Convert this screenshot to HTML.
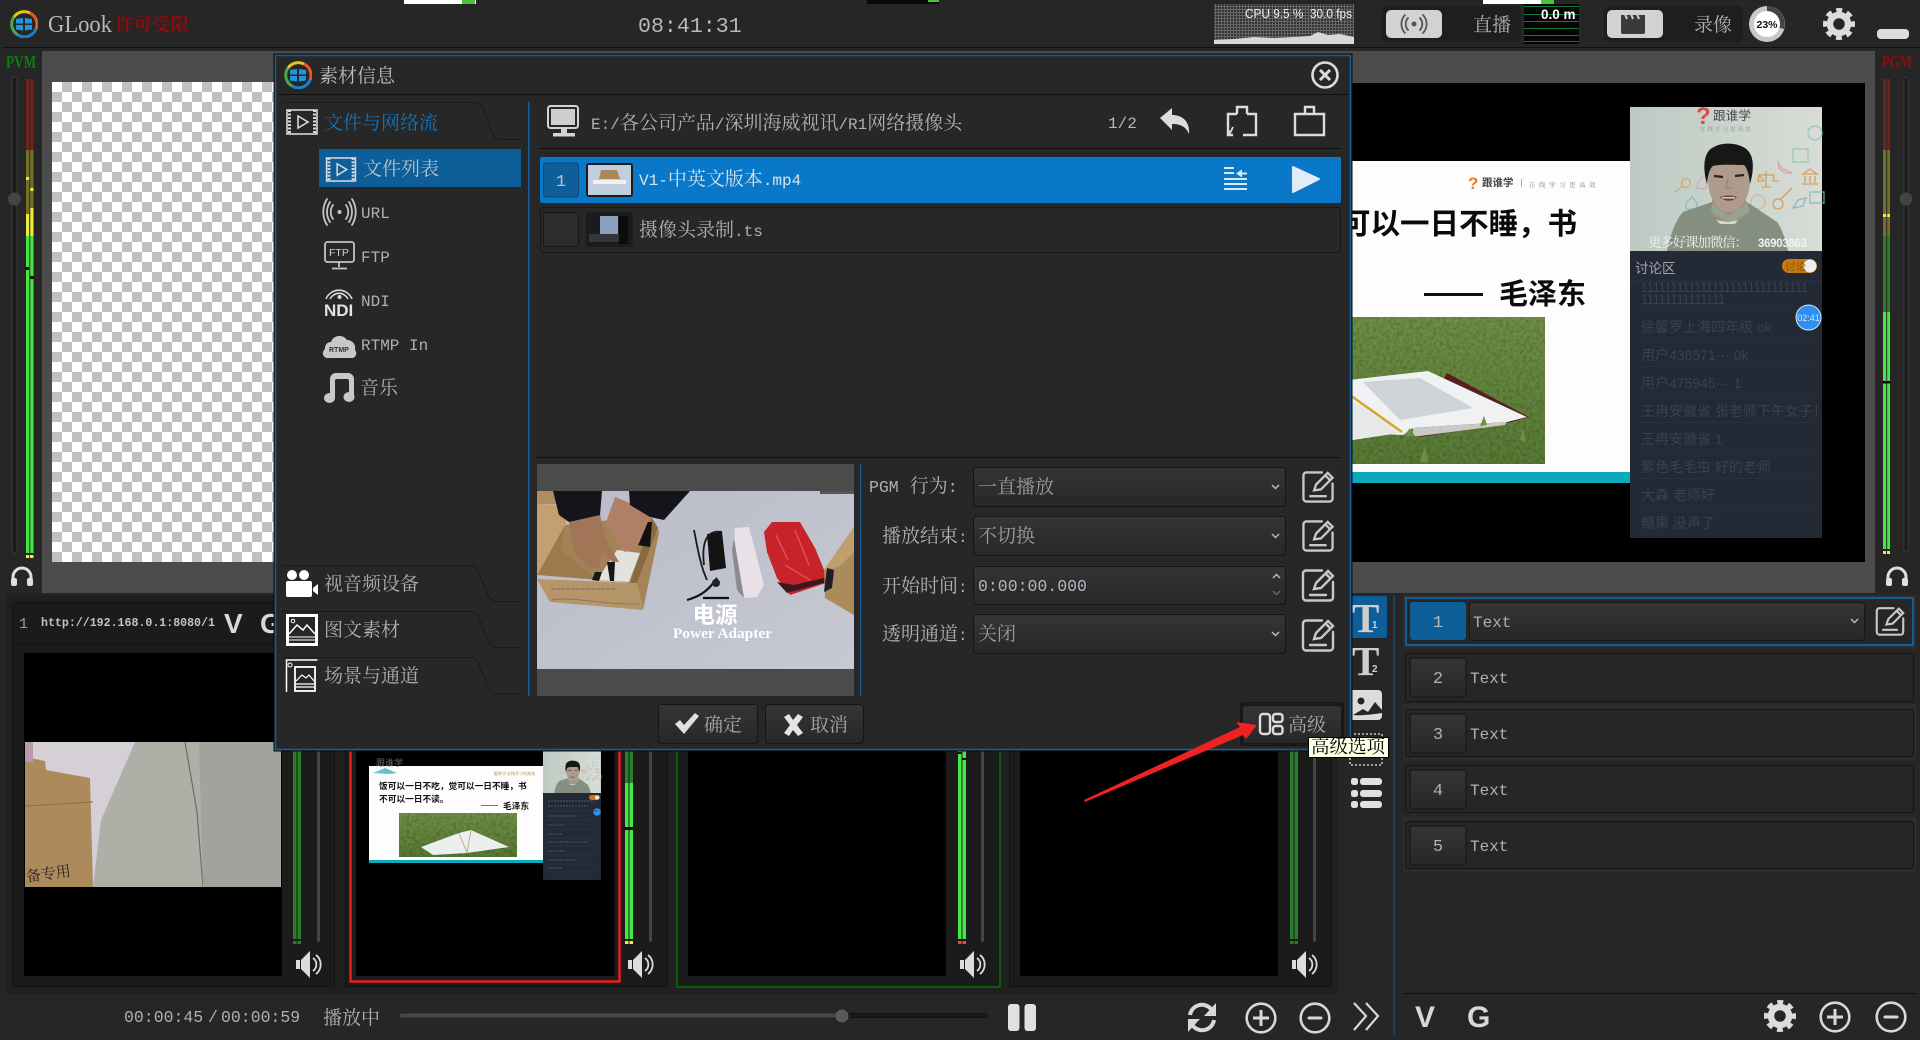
<!DOCTYPE html>
<html lang="zh"><head><meta charset="utf-8"><title>GLook</title>
<style>
html,body{margin:0;padding:0;background:#262626;width:1920px;height:1040px;overflow:hidden}
svg{display:block;position:absolute;left:0;top:0}
text{font-family:"Liberation Serif","Noto Serif CJK SC",serif;font-size:19px;fill:#b0b0b0;white-space:pre}
.m{font-family:"Liberation Mono",monospace;font-size:16px}
.b{font-family:"Liberation Sans","Noto Sans CJK SC",sans-serif;font-weight:bold}
.n{font-family:"Liberation Sans","Noto Sans CJK SC",sans-serif}
.c{fill:#3a414e;font-size:14px;font-family:"Liberation Sans","Noto Sans CJK SC",sans-serif}
</style></head><body>
<svg width="1920" height="1040" viewBox="0 0 1920 1040" xmlns="http://www.w3.org/2000/svg">
<defs>
<pattern id="chk" width="20" height="20" patternUnits="userSpaceOnUse" x="52" y="82"><rect width="20" height="20" fill="#fff"/><rect x="10" width="10" height="10" fill="#c0c0c0"/><rect y="10" width="10" height="10" fill="#c0c0c0"/></pattern>
<pattern id="grid" width="3" height="3" patternUnits="userSpaceOnUse"><rect width="3" height="3" fill="#333"/><rect width="3" height="1" fill="#666"/><rect width="1" height="3" fill="#666"/></pattern>
<linearGradient id="btn" x1="0" y1="0" x2="0" y2="1"><stop offset="0" stop-color="#353535"/><stop offset="1" stop-color="#272727"/></linearGradient>
<linearGradient id="wall" x1="0" y1="0" x2="1" y2="0"><stop offset="0" stop-color="#bccac3"/><stop offset="1" stop-color="#d8dcd6"/></linearGradient>
<linearGradient id="grass" x1="0" y1="0" x2="0" y2="1"><stop offset="0" stop-color="#6f8f45"/><stop offset="1" stop-color="#587a35"/></linearGradient>
<linearGradient id="floor" x1="0" y1="0" x2="1" y2="1"><stop offset="0" stop-color="#b9bcc8"/><stop offset="1" stop-color="#c6c9d2"/></linearGradient>
<filter id="tx" x="0" y="0" width="100%" height="100%"><feTurbulence type="fractalNoise" baseFrequency="0.3" numOctaves="2" result="n"/><feColorMatrix in="n" type="matrix" values="0 0 0 0 0 0 0 0 0 0 0 0 0 0 0 0 0 0 .8 -.28" result="a"/><feMerge><feMergeNode in="SourceGraphic"/><feMergeNode in="a"/></feMerge></filter>

<symbol id="logo" viewBox="0 0 28 28">
<g fill="none" stroke-width="3"><path d="M4 7A12.5 12.5 0 0 1 20 3" stroke="#e8c020"/><path d="M20 3A12.5 12.5 0 0 1 26 19" stroke="#e8582a"/><path d="M26 19A12.5 12.5 0 0 1 8 25" stroke="#1a7fd0"/><path d="M8 25A12.5 12.5 0 0 1 4 7" stroke="#4aa84a"/></g>
<path d="M6 9l7-1v5.500H6zM15 8l7 1v4.500h-7zM6 15h7v5.500l-7-1zM15 15h7v4.500l-7 1z" fill="#1f96e0"/>
</symbol>
<symbol id="edit" viewBox="0 0 34 34"><g fill="none" stroke="#c8c8c8" stroke-width="2.400" stroke-linecap="round"><path d="M21 2.500H5a3 3 0 0 0-3 3v24a3 3 0 0 0 3 3h24a3 3 0 0 0 3-3V14"/><path d="M13 21l2-6L27 3l5 5-12 12zM24.500 5.500l5 5"/><path d="M9 27h16"/></g></symbol>
<symbol id="gear" viewBox="0 0 32 32"><circle cx="16" cy="16" r="9" fill="none" stroke="#dcdcdc" stroke-width="6.500"/><circle cx="16" cy="16" r="13.500" fill="none" stroke="#dcdcdc" stroke-width="5" stroke-dasharray="5.800 4.800" stroke-dashoffset="2.900"/></symbol>
<symbol id="film" viewBox="0 0 32 26"><rect x="1" y="1" width="30" height="24" fill="none" stroke="#d8d8d8" stroke-width="1.600"/><path d="M3.500 1v24M28.500 1v24" stroke="#d8d8d8" stroke-width="3" stroke-dasharray="2 1.500"/><path d="M12 7l10 6-10 6z" fill="none" stroke="#d8d8d8" stroke-width="1.600"/></symbol>
<symbol id="spk" viewBox="0 0 27 27"><path d="M0 9h4v9H0zM5 9l9-9v27l-9-9z" fill="#dcdcdc"/><path d="M17 7a8 8 0 0 1 0 13M20 4a12 12 0 0 1 0 19" fill="none" stroke="#dcdcdc" stroke-width="1.800"/></symbol>
<symbol id="hp" viewBox="0 0 24 20"><path d="M3 14V11a9 9 0 0 1 18 0v3" fill="none" stroke="#e0e0e0" stroke-width="3"/><rect x="1" y="12" width="6" height="8" rx="2" fill="#e0e0e0"/><rect x="17" y="12" width="6" height="8" rx="2" fill="#e0e0e0"/></symbol>
<symbol id="plus" viewBox="0 0 32 32"><circle cx="16" cy="16" r="14.300" fill="none" stroke="#d8d8d8" stroke-width="2.600"/><path d="M8 16h16M16 8v16" stroke="#d8d8d8" stroke-width="3"/></symbol>
<symbol id="minus" viewBox="0 0 32 32"><circle cx="16" cy="16" r="14.300" fill="none" stroke="#d8d8d8" stroke-width="2.600"/><path d="M10 16h12" stroke="#d8d8d8" stroke-width="3" stroke-linecap="round"/></symbol>
<g id="man">
<rect x="1630" y="107" width="192" height="144" fill="url(#wall)"/>
<g fill="none" stroke-width="1.300" opacity=".85">
<rect x="1793" y="149" width="15" height="13" stroke="#8fc8a8"/>
<path d="M1778 161c2 8 6 8 14 12h-6l-7-4z" stroke="#d89aa0"/>
<path d="M1766 171v15M1759 175h15M1759 175l-1 6h6zM1774 175l-1 6h6M1762 187h9" stroke="#d8964a"/>
<path d="M1803 174l7-5 7 5zM1805 176v7M1810 176v7M1815 176v7M1802 184h16" stroke="#d8964a"/>
<circle cx="1778" cy="204" r="5" stroke="#d8964a"/><path d="M1781 199l11-11" stroke="#d8964a"/>
<path d="M1793 208l5-8 8-2-3 8z" stroke="#7cb8c0"/>
<rect x="1810" y="192" width="14" height="11" stroke="#7cb8c0"/>
<circle cx="1758" cy="202" r="7" stroke="#d8b080"/>
<circle cx="1686" cy="183" r="4.500" stroke="#d8a060"/><path d="M1683 186l-8 6" stroke="#d8a060"/>
<path d="M1696 188l6-12 5 3-1 10z" stroke="#d8a8b0"/>
<path d="M1686 203l6-6 5 6v6h-11z" stroke="#7cb8c0"/>
<circle cx="1815" cy="133" r="7" stroke="#8cc4c0"/>
</g>
<path d="M1667 251c3-15 8-30 16-39l29-10 17 8 18-8 30 20c6 9 9 19 11 29z" fill="#858f80"/>
<path d="M1712 200h34l2 14-18 12-17-10z" fill="#a08e80"/>
<path d="M1712 204l17 12 18-13 3 8-20 12-19-11z" fill="#98a292"/>
<path d="M1716 220l13 2 9-2-3 4h-15z" fill="#d2d8ce"/>
<ellipse cx="1729" cy="180" rx="21" ry="32" fill="#ae9b8c"/>
<path d="M1707 184c-5-18-3-33 7-37 8-5 22-4 29 0 11 5 12 20 7 37-1-8-2-15-6-19-10 0-24-1-31 1-4 3-5 10-6 18z" fill="#171715"/>
<path d="M1714 176l9 1M1735 176l9-1" stroke="#2c2420" stroke-width="2.200"/><path d="M1728 179l-2 9h5" stroke="#907c6e" fill="none"/>
<path d="M1720 197c6-2 12-2 17 0-4 5-12 5-17 0z" fill="#6a4038"/><path d="M1722 197h13v1.500h-13z" fill="#d8d0c8"/>
</g>
</defs>

<!-- top bar -->
<rect x="2" y="47" width="1918" height="1" fill="#111"/>
<rect x="404" y="0" width="72" height="4" fill="#fff"/><rect x="462" y="0" width="13" height="4" fill="#4ec23e"/>
<rect x="867" y="0" width="72" height="4" fill="#0a0a0a"/><rect x="928" y="0" width="11" height="2" fill="#4ec23e"/>
<rect x="1483" y="0" width="71" height="4" fill="#fff"/><rect x="1541" y="0" width="13" height="4" fill="#4ec23e"/>
<use href="#logo" x="10" y="10" width="28" height="28"/>
<text x="48" y="32" textLength="64" lengthAdjust="spacingAndGlyphs" style="font-family:'Liberation Serif',serif;font-size:24px;fill:#b8b8b8">GLook</text>
<text x="115" y="31" style="font-size:18.500px;fill:#900c0c;font-weight:bold">许可受限</text>
<text x="638" y="32" style="font-family:'Liberation Mono',monospace;font-size:21.600px;fill:#b8b8b8">08:41:31</text>
<rect x="1214" y="4" width="140" height="40" fill="url(#grid)"/>
<path d="M1214 44v-4l20-1 20-2 20 1 20-1 16-1 8-4 10 3 12-1 14 3v7z" fill="#d8d8d8"/>
<text x="1245" y="18" textLength="107" lengthAdjust="spacingAndGlyphs" class="n" style="font-size:12.500px;fill:#eee">CPU 9.5 %  30.0 fps</text>
<rect x="1382" y="6" width="139" height="36" rx="5" fill="#1e1e1e"/>
<rect x="1386" y="10" width="56" height="28" rx="5" fill="#d2d2d2"/>
<g fill="none" stroke="#555" stroke-width="1.800" stroke-linecap="round"><path d="M1408 18a9 9 0 0 0 0 12M1405 15a13 13 0 0 0 0 18M1420 18a9 9 0 0 1 0 12M1423 15a13 13 0 0 1 0 18"/></g><circle cx="1414" cy="24" r="2.500" fill="#555"/>
<text x="1473" y="31">直播</text>
<rect x="1524" y="4" width="55" height="40" fill="#050505"/>
<path d="M1524 6.500h55M1524 14.500h55M1524 21.500h55M1524 28.500h55M1524 35.500h55M1524 41.500h55" stroke="#0b7a3a"/>
<text x="1541" y="19" class="b" style="font-size:13.500px;fill:#fff">0.0 m</text>
<rect x="1604" y="6" width="139" height="36" rx="5" fill="#1e1e1e"/>
<rect x="1607" y="10" width="56" height="28" rx="5" fill="#d2d2d2"/>
<path d="M1621 15h24v17a2 2 0 0 1-2 2h-20a2 2 0 0 1-2-2z" fill="#3a3a3a"/><path d="M1625 14l2 5M1631 14l2 5M1637 14l2 5" stroke="#d2d2d2" stroke-width="2"/>
<text x="1694" y="31">录像</text>
<circle cx="1767" cy="24" r="18" fill="#c8c8c8"/><path d="M1767 24V6a18 18 0 0 1 17 23z" fill="#444"/><circle cx="1767" cy="24" r="13" fill="#fff"/>
<text x="1767" y="28" text-anchor="middle" class="b" style="font-size:10.500px;fill:#111">23%</text>
<use href="#gear" x="1823" y="8" width="32" height="32"/>
<rect x="1877" y="29" width="32" height="10" rx="4" fill="#dcdcdc"/>

<!-- stage -->
<rect x="42" y="51" width="1833" height="542" fill="#4b4b4b"/>
<rect x="52" y="82" width="400" height="480" fill="url(#chk)"/>
<text x="6" y="68" textLength="30" lengthAdjust="spacingAndGlyphs" style="font-family:'Liberation Serif',serif;font-size:18px;fill:#0c7d0c;font-weight:bold">PVM</text>
<text x="1882" y="68" textLength="30" lengthAdjust="spacingAndGlyphs" style="font-family:'Liberation Serif',serif;font-size:18px;fill:#8d0e0e;font-weight:bold">PGM</text>

<!-- left meter -->
<rect x="12" y="77" width="5" height="476" rx="2.500" fill="#1a1a1a" stroke="#3a3a3a"/>
<circle cx="14.500" cy="199" r="6.500" fill="#444"/>
<g id="lm"><rect x="26" y="79" width="7.500" height="71" fill="#6e2222"/><rect x="26" y="150" width="7.500" height="86" fill="#74702a"/><rect x="26" y="236" width="7.500" height="317" fill="#44e844"/><rect x="26" y="214" width="3.200" height="22" fill="#eeee3a"/><rect x="30" y="208" width="3.500" height="28" fill="#eeee3a"/><rect x="26" y="177" width="3.200" height="3" fill="#eeee3a"/><rect x="30" y="188" width="3.500" height="3" fill="#eeee3a"/><rect x="29.300" y="79" width="1" height="474" fill="#2a2a2a"/><rect x="26" y="267" width="3.200" height="3" fill="#000"/><rect x="30" y="276" width="3.500" height="3" fill="#000"/></g>
<rect x="26" y="555" width="3.200" height="3" fill="#eeee3a"/><rect x="30" y="555" width="3.500" height="3" fill="#eeee3a"/>
<use href="#hp" x="10" y="566" width="24" height="20"/>

<!-- right meter -->
<rect x="1904" y="77" width="4" height="475" rx="2" fill="#1a1a1a" stroke="#3a3a3a"/>
<circle cx="1906" cy="199" r="6.500" fill="#444"/>
<rect x="1883" y="79" width="7" height="71" fill="#6e2222"/><rect x="1883" y="150" width="7" height="86" fill="#74702a"/><rect x="1883" y="236" width="7" height="76" fill="#2c7c2c"/><rect x="1883" y="312" width="7" height="237" fill="#44e844"/><rect x="1883" y="214" width="7" height="3" fill="#eeee3a"/><rect x="1883" y="381" width="7" height="2.500" fill="#000"/><rect x="1886.200" y="79" width="1" height="470" fill="#2a2a2a"/>
<rect x="1883" y="551" width="3" height="3" fill="#eeee3a"/><rect x="1887" y="551" width="3" height="3" fill="#eeee3a"/>
<use href="#hp" x="1885" y="566" width="24" height="20"/>

<!-- PGM -->
<rect x="1340" y="83" width="525" height="479" fill="#000"/>
<rect x="1340" y="161" width="290" height="311" fill="#fdfdfd"/>
<rect x="1340" y="472" width="290" height="11" fill="#0aa9bb"/>
<text x="1468" y="189" class="b" style="font-size:17px;fill:#e08020">?</text>
<text x="1482" y="186" class="b" style="font-size:10.500px;fill:#444">跟谁学</text>
<rect x="1521" y="179" width="1" height="8" fill="#aaa"/>
<text x="1529" y="187" style="font-size:6.500px;fill:#888;letter-spacing:3.500px">在线学习更高效</text>
<text x="1341" y="234" class="b" style="font-size:29.500px;fill:#0a0a0a">可以一日不睡，书</text>
<rect x="1424" y="293" width="59" height="3" fill="#111"/>
<text x="1499" y="304" class="b" style="font-size:29px;fill:#0a0a0a">毛泽东</text>
<rect x="1340" y="317" width="205" height="147" fill="url(#grass)" filter="url(#tx)"/>
<path d="M1447 373l82 44-22 6-87 14-6-6z" fill="#5a1e1e"/>
<path d="M1340 381l88-10 99 46-20 5-94 6-10 7-63-3z" fill="#f0f1f3"/>
<path d="M1413 428l94-6-2 3-85 11-7 0z" fill="#c9c9c6"/>
<path d="M1363 382l57-4 53 30-73 12z" fill="#cfd2d6"/>
<path d="M1340 392l53 35 7 6-60 9z" fill="#e6e8ea"/>
<path d="M1340 388l62 44" stroke="#d4a830" stroke-width="2.500"/>
<path d="M1404 436l6-8 5 8zM1480 426l4-10 3 9zM1420 462l5-16 3 16zM1520 440l3-12 3 14z" fill="#6f8f45"/>
<use href="#man"/>
<text x="1648" y="247" textLength="100" lengthAdjust="spacing" style="font-size:13.500px;fill:#f2f2f2">更多好课加微信：</text>
<text x="1758" y="247" textLength="49" class="b" style="font-size:11.500px;fill:#f2f2f2">36903863</text>
<text x="1696" y="124" class="b" style="font-size:24px;fill:#d94a4a">?</text>
<text x="1713" y="120" class="n" style="font-size:12.700px;fill:#4a4a4a">跟谁学</text>
<text x="1700" y="131" style="font-size:5.500px;fill:#8a9690;letter-spacing:2px">在线学习更高效</text>
<rect x="1630" y="251" width="192" height="287" fill="#232a35"/>
<text x="1635" y="273" class="n" style="font-size:13.500px;fill:#a0a4aa">讨论区</text>
<rect x="1782" y="259" width="35" height="14" rx="7" fill="#c47a10"/><circle cx="1810" cy="266" r="6.500" fill="#eee"/>
<text x="1785" y="270" class="n" style="font-size:10.500px;fill:#8a5510">讨论</text>
<rect x="1630" y="281" width="192" height="1" fill="#2d3440"/>
<text x="1641" y="292" textLength="167" lengthAdjust="spacingAndGlyphs" class="c">1111111111111111111111111111</text>
<text x="1641" y="304" textLength="84" lengthAdjust="spacingAndGlyphs" class="c">11111111111111</text>
<text x="1641" y="332" class="c">徐馨罗上海四年级 ok</text>
<text x="1641" y="360" class="c">用户436571··· 0k</text>
<text x="1641" y="388" class="c">用户475945··· 1</text>
<text x="1641" y="416" class="c">王冉安徽省 张老师下午女子！</text>
<text x="1641" y="444" class="c">王冉安徽省 1</text>
<text x="1641" y="472" class="c">紫色毛毛虫 好的老师</text>
<text x="1641" y="500" class="c">大森 老师好</text>
<text x="1641" y="528" class="c">糖果 没声了</text>
<path d="M1636 310.500h180M1636 338.500h180M1636 366.500h180M1636 394.500h180M1636 422.500h180M1636 450.500h180M1636 478.500h180M1636 506.500h180" stroke="#283040"/>
<circle cx="1808.500" cy="317.500" r="12.500" fill="#2e8ff0" stroke="#cfe4f8"/>
<text x="1808.500" y="321" text-anchor="middle" class="n" style="font-size:9px;fill:#cfe4f8">02:41</text>

<!-- bottom panel -->
<rect x="6" y="595" width="1332" height="399" fill="#202020"/>
<g fill="#1b1b1b" stroke="#111"><rect x="12.500" y="602.500" width="322" height="384" rx="3"/><rect x="345.500" y="602.500" width="322" height="384" rx="3"/><rect x="1009.500" y="602.500" width="322" height="384" rx="3"/></g>
<rect x="677" y="602.500" width="323" height="384.500" fill="#1b1b1b" stroke="#0c5c0c" stroke-width="2"/>
<rect x="350.500" y="602" width="269" height="379.500" fill="#1b1b1b" stroke="#ea1c1c" stroke-width="2.500"/>
<rect x="18" y="643" width="312" height="1" fill="#111"/>
<text x="19" y="628" class="m" style="font-size:15px;fill:#8aa0b4">1</text>
<text x="41" y="626" class="m" style="font-size:11.600px;fill:#c4c4c4;font-weight:bold">http://192.168.0.1:8080/1</text>
<text x="224" y="633" class="b" style="font-size:28px;fill:#d8d8d8">V</text>
<text x="260" y="633" class="b" style="font-size:28px;fill:#d8d8d8">G</text>
<rect x="24" y="653" width="258" height="323" fill="#000"/>
<rect x="25" y="742" width="256" height="145" fill="#d4d0d6"/>
<path d="M135 742h146v145H93l8-67z" fill="#aeb0a8"/><path d="M185 742l12 70 6 75" stroke="#6b6e66" stroke-width="1.200" fill="none"/><path d="M199 742h82v145h-78z" fill="#a0a49c"/>
<path d="M25 757l20 4 1 9 44 8 3 109H25z" fill="#ac8a5c"/><path d="M25 806l68-4" stroke="#8a6c44"/>
<rect x="25" y="742" width="8" height="20" fill="#b89aa8"/>
<text x="26" y="880" style="font-size:15px;fill:#2a2216" transform="rotate(-8 40 875)">备专用</text>

<rect x="356" y="653" width="258.500" height="323" fill="#000"/>
<rect x="369" y="766" width="174" height="97" fill="#fdfdfd"/><rect x="369" y="860" width="174" height="3" fill="#0aa9bb"/>
<path d="M373 773l12-5 12 5-8 1z" fill="#6cc0c8"/>
<text x="376" y="766" class="n" style="font-size:9px;fill:#666">跟谁学</text>
<text x="379" y="789" class="b" style="font-size:8.700px;fill:#111">饭可以一日不吃，觉可以一日不睡，书</text>
<text x="379" y="802" class="b" style="font-size:8.700px;fill:#111">不可以一日不读。</text>
<rect x="481" y="805" width="17" height="1" fill="#777"/><text x="503" y="809" class="b" style="font-size:8.700px;fill:#111">毛泽东</text>
<text x="494" y="775" style="font-size:4px;fill:#a87020">跟谁学 在线学习更高效</text>
<rect x="399" y="813" width="118" height="44" fill="url(#grass)" filter="url(#tx)"/>
<path d="M421 847l38-14 12-3 38 17-42 6-34 2z" fill="#eceef0"/><path d="M459 833l8 20M471 830l-4 23" stroke="#c0b090"/>
<g transform="translate(50.700 717.200) scale(.302)"><use href="#man"/></g>
<rect x="543" y="793" width="58" height="87" fill="#232a35"/>
<rect x="589" y="795" width="11" height="5" rx="2.500" fill="#c47a10"/><circle cx="597" cy="797.500" r="2" fill="#eee"/>
<circle cx="597" cy="812" r="3.800" fill="#2e8ff0"/>
<path d="M547 811h50M547 820h50M547 829h50M547 838h50M547 846h50M547 855h50M547 864h50M547 872h50" stroke="#2d3440" stroke-width=".7"/>
<path d="M548 801h46M548 806h40M548 816h30M548 825h16M548 834h14M548 842h40M548 851h18M548 860h28M548 868h14" stroke="#434a58" stroke-width="1.500" stroke-dasharray="2 1"/>

<rect x="688" y="653" width="258" height="323" fill="#000"/>
<rect x="1020" y="653" width="258" height="323" fill="#000"/>

<!-- card meters -->
<g>
<path d="M293 653h3.500v286H293zM297.500 653h3.500v286h-3.500z" fill="#2a7d2a"/><rect x="293" y="941" width="3.500" height="3" fill="#2a7d2a"/><rect x="297.500" y="941" width="3.500" height="3" fill="#2a7d2a"/>
<rect x="317" y="653" width="3" height="289" rx="1.500" fill="#454545"/><use href="#spk" x="296" y="951" width="27" height="27"/>
<path d="M625 653h3.500v130H625zM629.500 653h3.500v130h-3.500z" fill="#2a7d2a"/><path d="M625 783h3.500v156H625zM629.500 783h3.500v156h-3.500z" fill="#44e844"/><rect x="625" y="827" width="8" height="3" fill="#000"/><rect x="625" y="941" width="3.500" height="3" fill="#eeee3a"/><rect x="629.500" y="941" width="3.500" height="3" fill="#eeee3a"/>
<rect x="649" y="653" width="3" height="289" rx="1.500" fill="#454545"/><use href="#spk" x="628" y="951" width="27" height="27"/>
<path d="M958 653h3.500v286H958zM962.500 653h3.500v286h-3.500z" fill="#44e844"/><rect x="958" y="941" width="3.500" height="3" fill="#ee4444"/><rect x="962.500" y="941" width="3.500" height="3" fill="#ee4444"/><rect x="958" y="752" width="3.500" height="2" fill="#000"/><rect x="962.500" y="758" width="3.500" height="2" fill="#000"/>
<rect x="981" y="653" width="3" height="289" rx="1.500" fill="#454545"/><use href="#spk" x="960" y="951" width="27" height="27"/>
<path d="M1290 653h3.500v286h-3.500zM1294.500 653h3.500v286h-3.500z" fill="#2a7d2a"/><rect x="1290" y="941" width="3.500" height="3" fill="#2a7d2a"/><rect x="1294.500" y="941" width="3.500" height="3" fill="#2a7d2a"/>
<rect x="1313" y="653" width="3" height="289" rx="1.500" fill="#454545"/><use href="#spk" x="1292" y="951" width="27" height="27"/>
</g>

<!-- transport bar -->
<text x="124" y="1022" class="m" style="font-size:16.500px;fill:#b0b0b0">00:00:45</text>
<text x="208" y="1022" class="m" style="font-size:16.500px;fill:#b0b0b0">/</text>
<text x="221" y="1022" class="m" style="font-size:16.500px;fill:#b0b0b0">00:00:59</text>
<text x="323" y="1024">播放中</text>
<rect x="400" y="1013.500" width="442" height="4" rx="2" fill="#484848"/>
<rect x="842" y="1013.500" width="145" height="4" rx="2" fill="#191919" stroke="#111"/>
<circle cx="842" cy="1016" r="6.500" fill="#5a5a5a"/>
<rect x="1008" y="1004" width="11.500" height="27" rx="3" fill="#e0e0e0"/><rect x="1024.500" y="1004" width="11.500" height="27" rx="3" fill="#e0e0e0"/>
<g fill="none" stroke="#d8d8d8" stroke-width="4"><path d="M1190 1015a12 12 0 0 1 21-6"/><path d="M1214 1020a12 12 0 0 1-21 6"/></g>
<path d="M1216 1003v13h-12zM1188 1032v-13h12z" fill="#d8d8d8"/>
<use href="#plus" x="1245" y="1002" width="32" height="32"/><use href="#minus" x="1299" y="1002" width="32" height="32"/>
<path d="M1354 1003l12 13-12 14M1366 1003l12 13-12 14" fill="none" stroke="#d8d8d8" stroke-width="2.200"/>

<!-- right col icons -->
<rect x="1345" y="596" width="42" height="42" rx="2" fill="#0e5e9a"/>
<text x="1352" y="632" style="font-family:'Liberation Serif',serif;font-size:41px;font-weight:bold;fill:#cfcfcf">T</text>
<text x="1372" y="628" class="b" style="font-size:10px;fill:#cfcfcf">1</text>
<text x="1352" y="675" style="font-family:'Liberation Serif',serif;font-size:41px;font-weight:bold;fill:#cfcfcf">T</text>
<text x="1372" y="672" class="b" style="font-size:10px;fill:#cfcfcf">2</text>
<rect x="1345" y="690" width="37" height="30" rx="4" fill="#dcdcdc"/><circle cx="1361" cy="701" r="3.500" fill="#262626"/><path d="M1353 715l10-6 5 3 7-10 7 8v3c-8 1-20 3-29 2z" fill="#262626"/>
<rect x="1350" y="734" width="32" height="31" fill="none" stroke="#c8c8c8" stroke-width="1.500" stroke-dasharray="2 2"/>
<g fill="#e0e0e0"><rect x="1351" y="778" width="7" height="7" rx="2.500"/><rect x="1360" y="778" width="22" height="7" rx="3"/><rect x="1351" y="790" width="7" height="7" rx="2.500"/><rect x="1360" y="790" width="22" height="7" rx="3"/><rect x="1351" y="801" width="7" height="7" rx="2.500"/><rect x="1360" y="801" width="22" height="7" rx="3"/></g>
<rect x="1393.500" y="595" width="1" height="440" fill="#14588c"/>

<!-- right list -->
<rect x="1403" y="595" width="513" height="54" fill="#2c2c2c"/>
<rect x="1406" y="598" width="507" height="47" fill="#262626" stroke="#0e5e9a" stroke-width="2"/>
<rect x="1410" y="602" width="56" height="38" rx="3" fill="#0e5e9a"/>
<text x="1438" y="627" text-anchor="middle" class="m" style="font-size:17px;fill:#bcbcbc">1</text>
<rect x="1469.500" y="602.500" width="395" height="38" rx="3" fill="url(#btn)" stroke="#181818"/>
<text x="1473" y="627" class="m">Text</text>
<path d="M1851 619l3.500 3.500 3.500-3.500" fill="none" stroke="#bbb" stroke-width="1.500"/>
<use href="#edit" x="1875" y="606" width="30" height="30"/>
<g id="rows">
<rect x="1403" y="704" width="513" height="56" fill="#2c2c2c"/><rect x="1403" y="817" width="513" height="55" fill="#2c2c2c"/>
<g fill="#262626" stroke="#151515"><rect x="1405.500" y="653.500" width="508" height="48" rx="3"/><rect x="1405.500" y="709.500" width="508" height="47" rx="3"/><rect x="1405.500" y="765.500" width="508" height="47" rx="3"/><rect x="1405.500" y="821.500" width="508" height="47" rx="3"/></g>
<g fill="url(#btn)" stroke="#151515"><rect x="1410" y="658" width="56" height="39" rx="3"/><rect x="1410" y="714" width="56" height="39" rx="3"/><rect x="1410" y="770" width="56" height="39" rx="3"/><rect x="1410" y="826" width="56" height="39" rx="3"/></g>
<g text-anchor="middle">
<text x="1438" y="683" class="m" style="font-size:17px">2</text><text x="1438" y="739" class="m" style="font-size:17px">3</text><text x="1438" y="795" class="m" style="font-size:17px">4</text><text x="1438" y="851" class="m" style="font-size:17px">5</text></g>
<text x="1470" y="683" class="m">Text</text><text x="1470" y="739" class="m">Text</text><text x="1470" y="795" class="m">Text</text><text x="1470" y="851" class="m">Text</text>
</g>
<rect x="1403" y="993" width="514" height="1" fill="#111"/>
<text x="1415" y="1027" class="b" style="font-size:30px;fill:#d8d8d8">V</text>
<text x="1467" y="1027" class="b" style="font-size:30px;fill:#d8d8d8">G</text>
<use href="#gear" x="1764" y="1000" width="32" height="32"/>
<use href="#plus" x="1819" y="1001" width="32" height="32"/>
<use href="#minus" x="1875" y="1001" width="32" height="32"/>

<!-- DIALOG -->
<rect x="274" y="54" width="1078" height="697" fill="#262626" stroke="#0c0c0c"/>
<rect x="275.500" y="55.500" width="1075" height="694" fill="#272727" stroke="#15609c" stroke-width="1.500"/>
<use href="#logo" x="284" y="61" width="28" height="28"/>
<text x="319" y="82" style="fill:#bdbdbd">素材信息</text>
<rect x="278" y="94" width="1070" height="1" fill="#111"/>
<circle cx="1325" cy="75" r="12.500" fill="none" stroke="#dcdcdc" stroke-width="2.600"/><path d="M1320 70l10 10M1330 70l-10 10" stroke="#dcdcdc" stroke-width="3"/>

<path d="M282 102.500H476c6 0 6 4 9 11l7 18c2 5 4 8 8 8h22" fill="none" stroke="#1a1a1a"/>
<use href="#film" x="286" y="109" width="32" height="26"/>
<text x="324" y="129" style="fill:#1473bb">文件与网络流</text>
<rect x="319" y="149" width="202" height="38" fill="#0e5e9a"/>
<use href="#film" x="325" y="157" width="32" height="25"/>
<text x="363" y="175" style="fill:#b8c0c8">文件列表</text>
<g fill="none" stroke="#c4c4c4" stroke-width="1.800" stroke-linecap="round"><path d="M333 205c-3 4-3 10 0 14M330 202c-4 6-4 14 0 20M327 199c-5 8-5 18 0 26M346 205c3 4 3 10 0 14M349 202c4 6 4 14 0 20M352 199c5 8 5 18 0 26"/></g><circle cx="339.500" cy="212" r="2" fill="#c4c4c4"/>
<text x="361" y="218" class="m">URL</text>
<rect x="325" y="242" width="29" height="20" rx="2.500" fill="none" stroke="#c4c4c4" stroke-width="1.800"/><text x="329" y="256" class="n" style="font-size:10.500px;fill:#d0d0d0">FTP</text><path d="M339 262v5M332 268.500h15" stroke="#c4c4c4" stroke-width="1.800"/>
<text x="361" y="262" class="m">FTP</text>
<g fill="none" stroke="#d8d8d8" stroke-width="1.600"><path d="M326 299a14 14 0 0 1 26 0M330 299a10 10 0 0 1 18 0"/></g><circle cx="339.500" cy="297" r="2" fill="#d8d8d8"/>
<text x="324" y="316" class="b" style="font-size:17px;fill:#e4e4e4">NDI</text>
<text x="361" y="306" class="m">NDI</text>
<path d="M329 358a5 5 0 0 1-4-9 6 6 0 0 1 6-7 9 9 0 0 1 16-2 8 8 0 0 1 8 10 5 5 0 0 1-2 8z" fill="#c8c8c8"/>
<text x="329" y="352" class="b" style="font-size:7px;fill:#333">RTMP</text>
<text x="361" y="350" class="m">RTMP In</text>
<path d="M330 397V379a6 6 0 0 1 6-6h12a6 6 0 0 1 6 6v18h-5V381a2 2 0 0 0-2-2h-10a2 2 0 0 0-2 2v16z" fill="#c8c8c8"/><ellipse cx="329.500" cy="398" rx="5.500" ry="5" fill="#c8c8c8"/><ellipse cx="349" cy="397" rx="5.500" ry="5" fill="#c8c8c8"/>
<text x="360" y="394">音乐</text>

<path d="M282 565.500H470c6 0 7 3 10 10l7 17c2 6 5 9 10 9h25" fill="none" stroke="#1a1a1a"/>
<path d="M282 611.500H470c6 0 7 3 10 10l7 17c2 6 5 9 10 9h25" fill="none" stroke="#1a1a1a"/>
<path d="M282 657.500H470c6 0 7 3 10 10l7 17c2 6 5 9 10 9h25" fill="none" stroke="#1a1a1a"/>
<circle cx="292" cy="575" r="5" fill="#fff"/><circle cx="304" cy="575" r="5" fill="#fff"/><rect x="286" y="581" width="26" height="16" rx="2" fill="#fff"/><path d="M313 588l5-4v11l-5-4z" fill="#fff"/>
<text x="324" y="590">视音频设备</text>
<rect x="287.500" y="615.500" width="29" height="29" fill="none" stroke="#fff" stroke-width="3"/><circle cx="293" cy="621" r="1.800" fill="none" stroke="#fff"/><path d="M289 634l8-9 6 5 4-5 8 9" fill="none" stroke="#fff" stroke-width="1.500"/><path d="M289 637h26M289 640h26" stroke="#fff"/>
<text x="324" y="636">图文素材</text>
<path d="M286.500 692v-32h31" fill="none" stroke="#fff" stroke-width="1.500"/><rect x="295" y="667" width="20" height="24" fill="none" stroke="#fff" stroke-width="1.800"/><path d="M296 681l6-6 4 3 3-3 5 6M296 684h18M296 687h18" fill="none" stroke="#fff" stroke-width="1.200"/><circle cx="290" cy="665" r="2" fill="none" stroke="#fff"/>
<text x="324" y="682">场景与通道</text>
<rect x="528" y="102" width="1.500" height="594" fill="#15609c"/>

<!-- file toolbar -->
<rect x="548" y="106" width="30" height="22" rx="2.500" fill="none" stroke="#d4d4d4" stroke-width="2"/><rect x="551" y="109" width="24" height="16" fill="#cfcfcf"/><rect x="561" y="128" width="6" height="5" fill="#d4d4d4"/><rect x="553" y="133" width="22" height="3.500" fill="#d4d4d4"/>
<text x="591" y="129"><tspan class="m">E:/</tspan>各公司产品<tspan class="m">/</tspan>深圳海威视讯<tspan class="m">/R1</tspan>网络摄像头</text>
<text x="1108" y="128" class="m" style="fill:#b8b8b8">1/2</text>
<path d="M1160 118l12-10v7c11 0 18 7 17 19-3-7-8-10-17-10v6z" fill="#dcdcdc"/>
<g fill="none" stroke="#dcdcdc" stroke-width="2.400"><path d="M1237 114h-9v21h5M1243 135h13v-21h-9M1237 114v-7h10v7"/><path d="M1295 114h29v21h-29zM1305 114v-7h9v7"/></g>
<path d="M1228 130l2 3 3-6" fill="none" stroke="#dcdcdc" stroke-width="1.800"/>
<rect x="539" y="148" width="802" height="1" fill="#111"/>
<rect x="540" y="157" width="801" height="46" rx="2" fill="#0a78c8"/>
<rect x="543.500" y="163" width="35" height="34" rx="3" fill="#0e5e9a" stroke="#0a4a7c"/>
<text x="561" y="186" text-anchor="middle" class="m" style="font-size:17px;fill:#b8c4d0">1</text>
<rect x="586" y="163" width="47" height="34" rx="3" fill="#1a1a1a"/><rect x="588" y="165" width="43" height="30" fill="#c2cfe0"/><path d="M601 170h16l3 9h-21z" fill="#a88a58"/><rect x="593" y="180" width="33" height="4" fill="#f0f0f0"/>
<text x="639" y="185" style="fill:#d8e2ea"><tspan class="m" style="fill:#d8e2ea">V1-</tspan>中英文版本<tspan class="m" style="fill:#d8e2ea">.mp4</tspan></text>
<path d="M1224 168h10M1224 173h10M1224 179h23M1224 184h23M1224 189h23" stroke="#d8e8f4" stroke-width="2"/><path d="M1236 173.500l6-4v3h5v2h-5v3z" fill="#d8e8f4"/>
<path d="M1293 167l26 12-26 13z" fill="#e0ecf6" stroke="#e0ecf6" stroke-width="2" stroke-linejoin="round"/>
<rect x="540.500" y="207.500" width="800" height="45" rx="3" fill="#272727" stroke="#181818"/>
<rect x="543.500" y="212.500" width="35" height="34" rx="3" fill="#2c2c2c" stroke="#171717"/>
<rect x="586" y="212" width="47" height="35" rx="3" fill="#1c1c1c"/><rect x="589" y="216" width="40" height="28" fill="#1a1a20"/><rect x="600" y="216" width="18" height="18" fill="#8aa0c0"/><rect x="589" y="234" width="30" height="8" fill="#33353a"/><rect x="619" y="216" width="9" height="28" fill="#0c0c0c"/>
<text x="639" y="236"><tspan>摄像头录制</tspan><tspan class="m">.ts</tspan></text>

<!-- dialog preview -->
<rect x="537" y="457" width="804" height="1" fill="#111"/>
<rect x="537" y="464" width="317" height="232" fill="#4b4b4b"/>
<rect x="537" y="491" width="317" height="178" fill="url(#floor)"/>
<rect x="820" y="491" width="34" height="3" fill="#55565c"/>
<path d="M537 491h20l2 13h-22z" fill="#b08d60"/>
<path d="M537 504l30 1 4 4-6 16-28 50z" fill="#c4a070"/>
<path d="M537 575l28-50 75-8 12 1 6 10-21 55z" fill="#9c7a4e"/>
<path d="M565 525l-4 25 36 30 40 3 15-65-12-1z" fill="#a58255"/>
<path d="M652 518l6 10-21 55h-7l14-40z" fill="#8a6a42"/>
<path d="M597 580l20-30 23 3-11 29z" fill="#e2e2de"/>
<path d="M607 562h8l-1 19h-4z" fill="#161616"/><path d="M592 580l3-8h7l-3 9z" fill="#161616"/>
<path d="M647 522l-10 23 13 2 2-25z" fill="#111"/>
<path d="M537 579l100 4 6 27-93-8z" fill="#b69568"/>
<path d="M637 583l21-55 1 5-16 77z" fill="#a58558"/>
<path d="M551 589h65" stroke="#8a7a5c" stroke-width="1.500" stroke-dasharray="4 1"/><path d="M552 600c20-4 50 5 88 4" stroke="#8a7a5c" fill="none"/>
<path d="M569 522l31-8 5 24 14 24h-7l-10-12-3 18-12-1-13-15z" fill="#a37558"/>
<path d="M615 497l15 6 20 14-13 31-12 4-11-14-9-13z" fill="#b08066"/>
<path d="M553 491h49l-2 24-31 7-10-7z" fill="#14141a"/><path d="M629 491h61l-26 29-14-3-20-12z" fill="#14141a"/>
<path d="M707 534l15-2 4 36-16 3z" fill="#141414"/>
<path d="M694 530c3 15 6 35 13 50M722 532c-18-3-20 15-18 33" fill="none" stroke="#1a1a1a" stroke-width="1.800"/>
<path d="M717 578c-8 12-16 18-30 22M703 598h26" fill="none" stroke="#111" stroke-width="2.200"/><circle cx="716" cy="583" r="4" fill="#222"/>
<path d="M735 528l14-1 15 58-7 12-13 1-10-56z" fill="#e8e2e8"/><path d="M734 538l10 60-7-8-5-40z" fill="#8a8a90"/>
<path d="M764 532l8-10h28l15 26 14 34-39 13-13-17-10-26z" fill="#c8222a"/>
<path d="M777 582l10 11 40-11-3-4-30 7z" fill="#3a1820"/>
<path d="M776 535l12 25M795 530l14 35M785 565l25 15" stroke="#e2505a" stroke-width="1.500" fill="none"/>
<path d="M854 527l-30 43 1 28 29 17z" fill="#ab8a5c"/><path d="M854 527l-30 43 15-3 15-15z" fill="#bf9e70"/><path d="M827 568l-3 24 8-4 2-18z" fill="#1e1e24"/>
<text x="715" y="623" text-anchor="middle" class="b" style="font-size:22.500px;fill:#fff">电源</text>
<text x="673" y="638" textLength="99" lengthAdjust="spacingAndGlyphs" style="font-family:'Liberation Serif',serif;font-size:14.500px;fill:#fff;font-weight:bold">Power Adapter</text>
<rect x="860" y="464" width="1.200" height="232" fill="#15609c"/>

<!-- form -->
<g fill="url(#btn)" stroke="#151515">
<rect x="973.500" y="467.500" width="312" height="39" rx="3"/><rect x="973.500" y="516.500" width="312" height="39" rx="3"/><rect x="973.500" y="566.500" width="312" height="38" rx="3"/><rect x="973.500" y="614.500" width="312" height="39" rx="3"/></g>
<text x="869" y="492"><tspan class="m" style="font-size:16.500px">PGM</tspan><tspan dx="11">行为</tspan><tspan class="m" style="font-size:16.500px">:</tspan></text>
<text x="882" y="542">播放结束<tspan class="m">:</tspan></text>
<text x="882" y="592">开始时间<tspan class="m">:</tspan></text>
<text x="882" y="640">透明通道<tspan class="m">:</tspan></text>
<text x="978" y="493" style="fill:#9c9c9c">一直播放</text>
<text x="978" y="542" style="fill:#9c9c9c">不切换</text>
<text x="978" y="591" class="m" style="font-size:16.500px;fill:#b0b8c0">0:00:00.000</text>
<text x="978" y="640" style="fill:#9c9c9c">关闭</text>
<g fill="none" stroke="#bbb" stroke-width="1.500"><path d="M1272 485l3.500 3.500 3.500-3.500M1272 534l3.500 3.500 3.500-3.500M1272 632l3.500 3.500 3.500-3.500M1273 578l3.500-3.500 3.500 3.500"/><path d="M1273 591l3.500 3.500 3.500-3.500" stroke="#666"/></g>
<use href="#edit" x="1301" y="470" width="34" height="33"/><use href="#edit" x="1301" y="519" width="34" height="33"/><use href="#edit" x="1301" y="568" width="34" height="34"/><use href="#edit" x="1301" y="618" width="34" height="34"/>

<!-- buttons -->
<g fill="url(#btn)" stroke="#151515"><rect x="658.500" y="704.500" width="99" height="39" rx="3"/><rect x="765.500" y="704.500" width="98" height="39" rx="3"/><rect x="1240.500" y="702.500" width="103" height="43" rx="3" fill="#1c1c1c"/><rect x="1242.500" y="705.500" width="99" height="38" rx="3"/></g>
<path d="M675 724l5-4 4 5 11-12 4 3-15 18z" fill="#e0e0e0"/>
<text x="704" y="731" style="fill:#a8a8a8">确定</text>
<path d="M784 717l5-3 4 6 5-6 5 3-6 8 6 8-5 3-5-6-4 6-5-3 6-8z" fill="#e4e4e4"/>
<text x="810" y="731" style="fill:#a8a8a8">取消</text>
<g fill="none" stroke="#dcdcdc" stroke-width="2.400"><rect x="1260" y="714" width="10" height="20" rx="3"/><rect x="1273" y="714" width="9.500" height="8" rx="2.500"/><rect x="1273" y="726" width="9.500" height="8" rx="2.500"/></g>
<text x="1288" y="731" style="fill:#a8a8a8">高级</text>

<!-- annotation -->
<path d="M1084 800L1240 727 1236 722 1257 725 1246 739 1243 735 1085 802z" fill="#ee2222"/>
<rect x="1308.500" y="737.500" width="80" height="20" fill="#ffffe6" stroke="#000"/>
<text x="1311" y="753" style="font-size:18.500px;fill:#000">高级选项</text>
</svg>
</body></html>
